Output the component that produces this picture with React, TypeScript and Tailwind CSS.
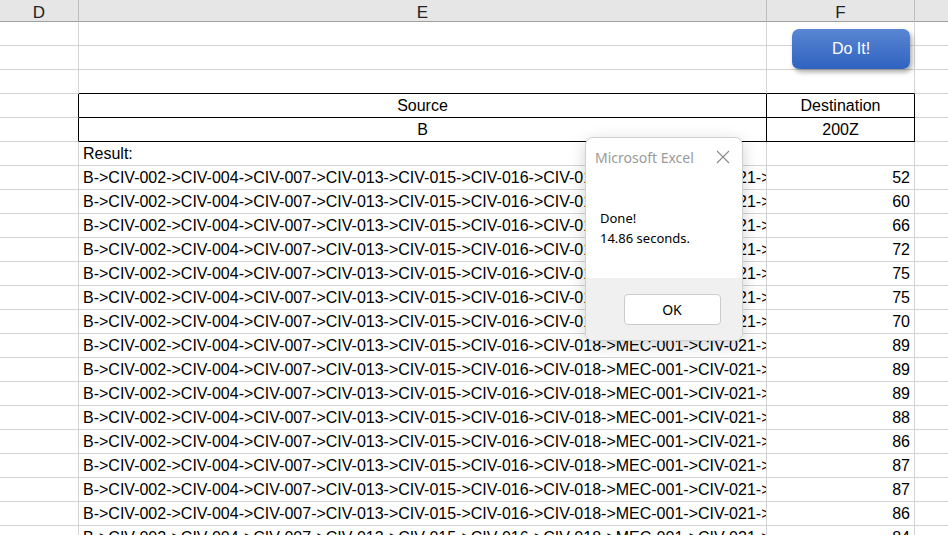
import React from "react";

const PATH =
  "B->CIV-002->CIV-004->CIV-007->CIV-013->CIV-015->CIV-016->CIV-018->MEC-001->CIV-021->CIV-022->CIV-030->200Z";

const results = [52, 60, 66, 72, 75, 75, 70, 89, 89, 89, 88, 86, 87, 87, 86, 84];

const cols = "grid grid-cols-[79px_688px_148px_1fr]";

function Row(props: {
  e?: React.ReactNode;
  f?: React.ReactNode;
  eClass?: string;
  fClass?: string;
  dClass?: string;
}) {
  const { e, f, eClass = "", fClass = "", dClass = "" } = props;
  return (
    <div className={cols + " h-[24px]"}>
      <div className={"border-r border-b border-[#d4d4d4] " + dClass} />
      <div
        className={
          "border-r border-b border-[#d4d4d4] flex items-center px-[4px] overflow-hidden whitespace-nowrap " +
          eClass
        }
      >
        {e}
      </div>
      <div
        className={
          "border-r border-b border-[#d4d4d4] flex items-center px-[4px] overflow-hidden whitespace-nowrap " +
          fClass
        }
      >
        {f}
      </div>
      <div className="border-b border-[#d4d4d4]" />
    </div>
  );
}

export default function App() {
  return (
    <div
      className="relative w-[948px] h-[535px] overflow-hidden bg-white text-black text-[16px]"
      style={{ fontFamily: '"Liberation Sans", Arial, sans-serif' }}
    >
      {/* column headers */}
      <div className={cols + " h-[22px] bg-[#e6e6e6] border-b border-[#9f9f9f] text-[#222] text-[17px]"}>
        <div className="border-r border-[#bdbdbd] flex items-center justify-center">D</div>
        <div className="border-r border-[#bdbdbd] flex items-center justify-center">E</div>
        <div className="border-r border-[#bdbdbd] flex items-center justify-center">F</div>
        <div />
      </div>

      <Row />
      <Row />
      <Row eClass="!border-b-black" fClass="!border-b-black" />
      <Row
        dClass="!border-r-black"
        e={<span className="w-full text-center">Source</span>}
        f={<span className="w-full text-center">Destination</span>}
        eClass="!border-r-black !border-b-black"
        fClass="!border-r-black !border-b-black"
      />
      <Row
        dClass="!border-r-black"
        e={<span className="w-full text-center">B</span>}
        f={<span className="w-full text-center">200Z</span>}
        eClass="!border-r-black !border-b-black"
        fClass="!border-r-black !border-b-black"
      />
      <Row e="Result:" />
      {results.map((n, i) => (
        <Row key={i} e={PATH} f={<span className="w-full text-right">{n}</span>} />
      ))}

      {/* macro button */}
      <button className="absolute left-[792px] top-[29px] w-[118px] h-[40px] rounded-[7px] bg-gradient-to-b from-[#5a86d3] to-[#2f63c0] text-white text-[16px] shadow-[2px_3px_5px_rgba(0,0,0,0.35)]">
        Do It!
      </button>

      {/* message box */}
      <div
        className="absolute left-[585px] top-[137px] w-[158px] h-[204px] rounded-[8px] border border-[#d0d0d0] bg-white overflow-hidden shadow-[0_4px_16px_rgba(0,0,0,0.18)] flex flex-col"
        style={{ fontFamily: '"Noto Sans", "Open Sans", sans-serif' }}
      >
        <div className="h-[38px] flex items-center justify-between pl-[9px] pr-[12px] text-[#9a9a9a] text-[14px]">
          <span>Microsoft Excel</span>
          <svg width="14" height="14" viewBox="0 0 14 14" className="text-[#8a8a8a]">
            <path d="M1 1L13 13M13 1L1 13" stroke="currentColor" strokeWidth="1.1" fill="none" />
          </svg>
        </div>
        <div className="flex-1 px-[14px] pt-[32px] text-[13px] leading-[20px] text-black">
          <div>Done!</div>
          <div>14.86 seconds.</div>
        </div>
        <div className="h-[62px] bg-[#f0f0f0] flex items-start justify-center pt-[16px]">
          <div className="w-[97px] h-[31px] rounded-[4px] border border-[#cccccc] bg-white flex items-center justify-center text-[14px] ml-[16px]">
            OK
          </div>
        </div>
      </div>
    </div>
  );
}
